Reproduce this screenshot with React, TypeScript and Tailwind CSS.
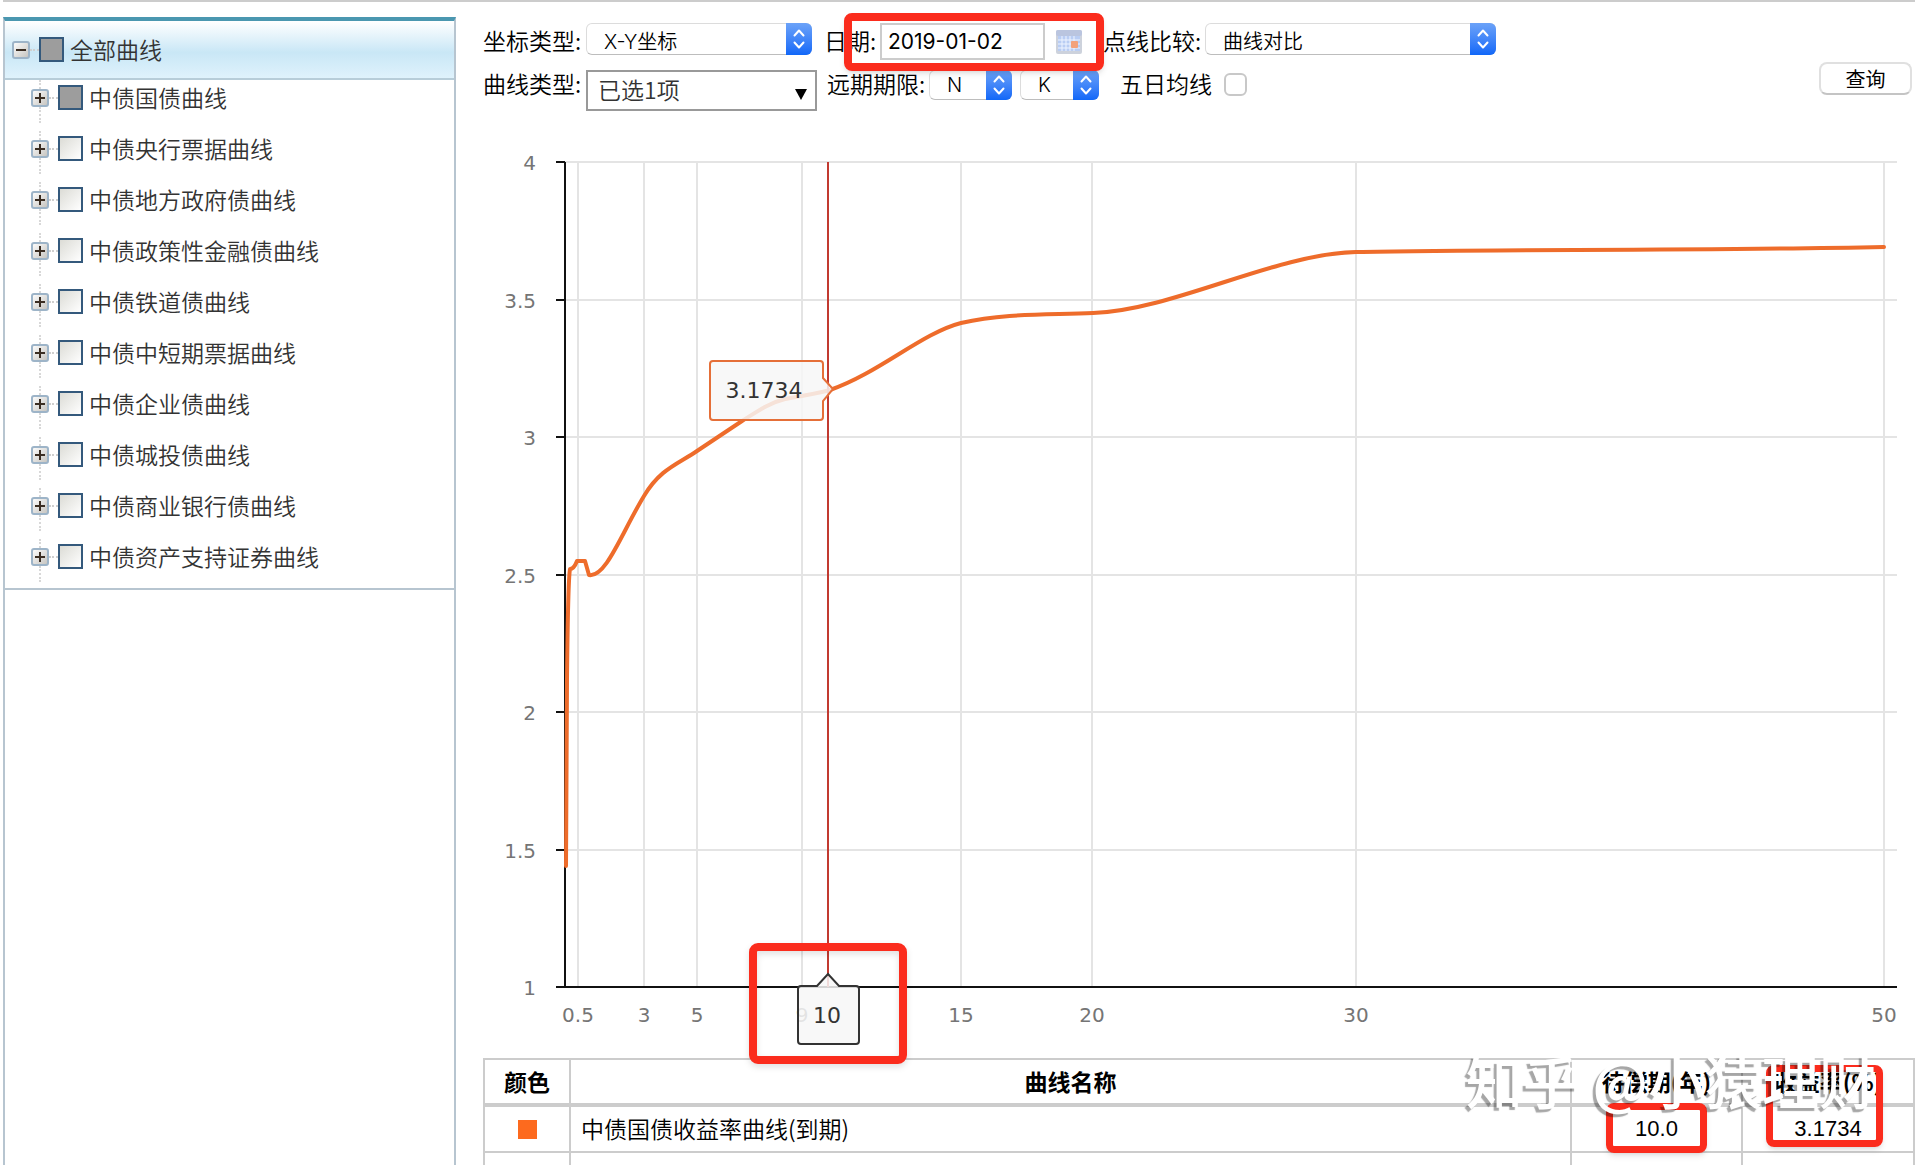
import React, { useState } from 'react';

const CURVE_NAMES = [
  '中债国债曲线',
  '中债央行票据曲线',
  '中债地方政府债曲线',
  '中债政策性金融债曲线',
  '中债铁道债曲线',
  '中债中短期票据曲线',
  '中债企业债曲线',
  '中债城投债曲线',
  '中债商业银行债曲线',
  '中债资产支持证券曲线',
];

const X_TICKS = [0.5, 3, 5, 9, 15, 20, 30, 50];
const Y_TICKS = [1, 1.5, 2, 2.5, 3, 3.5, 4];

const px = (v: number) => Math.round(81 + v * 26.37);
const py = (v: number) => Math.round(867 - (v - 1) * 275);

function Expander({ open }: { open?: boolean }) {
  return (
    <svg viewBox="0 0 18 18" className="block h-[18px] w-[18px]" aria-hidden="true">
      <defs>
        <linearGradient id="expander" x1="0" y1="0" x2="1" y2="1">
          <stop offset="0" stopColor="#ffffff" />
          <stop offset="1" stopColor="#c4c2bd" />
        </linearGradient>
      </defs>
      <rect x="1" y="1" width="16" height="16" rx="2" fill="url(#expander)" stroke="#9db4c8" strokeWidth="2" />
      <path d={open ? 'M4 9h10' : 'M4 9h10M9 4v10'} stroke="#3a2d22" strokeWidth="2" />
    </svg>
  );
}

interface TreeCheckProps {
  id: string;
  partial?: boolean;
}

function TreeCheck({ id, partial }: TreeCheckProps) {
  return (
    <input
      id={id}
      type="checkbox"
      className={`h-[25px] w-[25px] shrink-0 appearance-none border-2 border-[#34597c] ${
        partial ? 'bg-[#9d9d9d]' : 'bg-linear-to-br from-[#dcdcd6] to-white checked:bg-[#9d9d9d]'
      }`}
    />
  );
}

interface MacSelectProps {
  id: string;
  label: string;
  options: string[];
  className: string;
  compact?: boolean;
}

function MacSelect({ id, label, options, className, compact }: MacSelectProps) {
  return (
    <div className={`relative shrink-0 ${compact ? 'h-[30px]' : 'h-8'} ${className}`}>
      <select
        id={id}
        aria-label={label}
        className={`block h-full w-full appearance-none rounded-md border border-[#dcdcdc] border-b-[#bdbdbd] bg-white pl-[17px] font-[Inter,'Noto_Sans_CJK_SC',sans-serif] text-xl leading-7 ${
          compact ? 'pb-0.5' : 'pt-1'
        }`}
      >
        {options.map((o) => (
          <option key={o}>{o}</option>
        ))}
      </select>
      <span className="pointer-events-none absolute inset-y-0 right-0 flex w-[26px] items-center justify-center rounded-r-md bg-linear-to-b from-[#6ba2f8] to-[#0f67f8]">
        <svg viewBox="0 0 12 22" className="h-[22px] w-3" fill="none" stroke="white" strokeWidth="2" strokeLinecap="round" strokeLinejoin="round" aria-hidden="true">
          <path d="M1.500 7.500L6 2.500l4.500 5M1.500 14.500l4.500 5 4.500-5" />
        </svg>
      </span>
    </div>
  );
}

function CalendarIcon() {
  return (
    <svg viewBox="0 0 28 26" className="block h-[26px] w-7" aria-hidden="true">
      <rect x="1" y="1" width="26" height="24" rx="2" fill="#cdd2dc" />
      <rect x="1" y="1" width="26" height="6" rx="2" fill="#bac5df" />
      <rect x="3" y="7" width="22" height="15" fill="#b9cdf3" />
      <path d="M3 11h22M3 15h22M3 19h22M7 7v15M11 7v15M15 7v15M19 7v15" stroke="#eef4ff" strokeWidth="1" />
      <rect x="16" y="12" width="7" height="7" rx="1" fill="#f3a27c" />
    </svg>
  );
}

function Sidebar() {
  return (
    <aside className="mt-[15px] ml-[3px] w-[453px] shrink-0 border-x-2 border-t-4 border-x-[#b7c5d0] border-t-[#4a97b0] text-[23px] font-[350] text-[#333]">
      <div className="flex h-[59px] items-center border-b-2 border-[#b7cdd9] bg-linear-to-b from-white from-0% via-[#c9e7f6] via-55% to-[#dff2fc] pl-[7px]">
        <button type="button" aria-label="收起全部曲线">
          <Expander open />
        </button>
        <span className="w-[9px] border-t-2 border-dotted border-[#cfcfcf]" />
        <TreeCheck id="tree-all" partial />
        <label htmlFor="tree-all" className="ml-1.5">全部曲线</label>
      </div>
      <ul className="border-b-2 border-[#b7c5d0]">
        {CURVE_NAMES.map((name, i) => (
          <li key={name} className="flex h-[51px] items-start pl-[26px] last:h-[49px]">
            <div className="flex flex-col items-center">
              <span className="h-[9px] border-l-2 border-dotted border-[#d8d8d8]" />
              <button type="button" aria-label={`展开${name}`}>
                <Expander />
              </button>
              <span className="h-4 border-l-2 border-dotted border-[#d8d8d8]" />
            </div>
            <div className="flex h-[35px] items-center">
              <span className="w-[9px] border-t-2 border-dotted border-[#cfcfcf]" />
              <TreeCheck id={`tree-${i}`} partial={i === 0} />
              <label htmlFor={`tree-${i}`} className="ml-1.5">{name}</label>
            </div>
          </li>
        ))}
      </ul>
    </aside>
  );
}

function Toolbar() {
  const [date, setDate] = useState('2019-01-02');

  return (
    <form className="flex items-start justify-between pt-[21px]" onSubmit={(e) => e.preventDefault()}>
      <div className="flex flex-col gap-2.5 text-[23px] leading-[34px] font-[350] whitespace-nowrap">
        <div className="flex items-start">
          <label htmlFor="axis" className="w-[103px]">坐标类型:</label>
          <MacSelect id="axis" label="坐标类型" options={['X-Y坐标']} className="w-[226px]" />
          <div className="relative ml-3 flex items-start">
            <label htmlFor="date" className="w-14">日期:</label>
            <input
              id="date"
              type="text"
              value={date}
              onChange={(e) => setDate(e.target.value)}
              className="h-[37px] w-[165px] border-2 border-[#ccc] px-1.5 font-[Inter,sans-serif] text-[21px] font-normal"
            />
            <button type="button" aria-label="选择日期" className="mt-1.5 ml-2.5">
              <CalendarIcon />
            </button>
            <span className="pointer-events-none absolute -top-2.5 -right-[21px] -bottom-[11px] left-5 z-10 rounded-lg border-8 border-[#fb2c1d] shadow-md" />
          </div>
          <label htmlFor="compare" className="ml-5 w-[102px]">点线比较:</label>
          <MacSelect id="compare" label="点线比较" options={['曲线对比']} className="w-[291px]" />
        </div>
        <div className="flex items-start leading-[26px]">
          <span id="curve-type" className="w-[103px]">曲线类型:</span>
          <button
            type="button"
            aria-labelledby="curve-type"
            className="flex h-[41px] w-[231px] items-center justify-between border-2 border-[#999] pr-2 pb-1 pl-2.5 text-[#333]"
          >
            <span>已选1项</span>
            <svg viewBox="0 0 12 11" className="mt-3 h-[11px] w-3" aria-hidden="true">
              <path d="M0 0h12L6 11z" fill="black" />
            </svg>
          </button>
          <label htmlFor="forward-n" className="ml-2.5 w-[102px]">远期期限:</label>
          <MacSelect id="forward-n" label="远期期限 N" options={['N']} className="w-[83px]" compact />
          <MacSelect id="forward-k" label="远期期限 K" options={['K']} className="ml-2 w-[79px]" compact />
          <label htmlFor="average" className="ml-[21px]">五日均线</label>
          <input
            id="average"
            type="checkbox"
            className="mt-[3px] ml-3 h-[23px] w-[23px] appearance-none rounded-md border-2 border-[#c8c8c8] bg-white checked:bg-[#0f67f8]"
          />
        </div>
      </div>
      <button
        type="submit"
        className="mt-[39px] mr-[3px] h-[33px] w-[93px] shrink-0 rounded-lg border-2 border-[#e0e0e0] border-b-[#c4c4c4] text-xl leading-7"
      >
        查询
      </button>
    </form>
  );
}

function YieldChart() {
  return (
    <svg
      viewBox="-1 0 1432 938"
      className="mt-[9px] block h-auto w-full overflow-visible font-['DejaVu_Sans',sans-serif]"
      role="img"
      aria-label="中债国债收益率曲线"
    >
      <g stroke="#e4e4e4" strokeWidth="2">
        {X_TICKS.map((t) => (
          <line key={t} x1={px(t)} x2={px(t)} y1={py(4)} y2={py(1)} />
        ))}
        {Y_TICKS.slice(1).map((t) => (
          <line key={t} x1={px(0)} x2="1413" y1={py(t)} y2={py(t)} />
        ))}
      </g>
      <g stroke="#111" strokeWidth="2">
        <line x1={px(0)} x2={px(0)} y1={py(4)} y2={py(1)} />
        <line x1={px(0)} x2="1413" y1={py(1)} y2={py(1)} />
        {Y_TICKS.map((t) => (
          <line key={t} x1="72" x2={px(0)} y1={py(t)} y2={py(t)} />
        ))}
      </g>
      <g fill="#757575" fontSize="20">
        {Y_TICKS.map((t) => (
          <text key={t} x="52" y={py(t) + 8} textAnchor="end">{t}</text>
        ))}
        {X_TICKS.map((t) => (
          <text key={t} x={px(t)} y="902" textAnchor="middle">{t}</text>
        ))}
      </g>

      <path
        d="M82 746L83 560Q84 460 86 449Q90 449 93 441H101L105 455C122 458 138 412 160 376C176 349 194 344 213 331L258 301C274 291 285 283 301 279C318 276 330 274 346 270C395 253 438 213 477 203C520 193 562 195 609 193C690 190 790 134 872 132C1000 129 1200 131 1400 127"
        fill="none"
        stroke="#ee6c2b"
        strokeWidth="4"
        strokeLinejoin="round"
        strokeLinecap="round"
      />
      <line x1="344" x2="344" y1={py(4)} y2={py(1)} stroke="#c23a30" strokeWidth="2" />

      {/* value tooltip */}
      <path
        d="M229 241H336Q339 241 339 244V258L349 269L339 281V297Q339 300 336 300H229Q226 300 226 297V244Q226 241 229 241Z"
        fill="#f7f7f7"
        fillOpacity="0.85"
        stroke="#e56f38"
        strokeWidth="2"
      />
      <text x="280" y="278" fontSize="22" fill="#333" textAnchor="middle">3.1734</text>

      {/* term tooltip */}
      <path
        d="M317 866H333L344 854L355 866H372Q375 866 375 869V921Q375 924 372 924H317Q314 924 314 921V869Q314 866 317 866Z"
        fill="#f7f7f7"
        fillOpacity="0.85"
        stroke="#333"
        strokeWidth="2"
      />
      <text x="343" y="903" fontSize="22" fill="#333" textAnchor="middle">10</text>
      <rect x="269" y="827" width="150" height="113" rx="5" fill="none" stroke="#fb2c1d" strokeWidth="8" className="drop-shadow-md" />
    </svg>
  );
}

function ResultTable() {
  return (
    <table className="w-full table-fixed border-collapse border-2 border-[#ccc] text-[23px] leading-8">
      <colgroup>
        <col className="w-[86px]" />
        <col />
        <col className="w-[171px]" />
        <col className="w-[172px]" />
      </colgroup>
      <thead>
        <tr className="h-[46px] border-b-4 border-[#ccc] font-bold">
          <th className="border-r-2 border-[#ccc] pb-0.5">颜色</th>
          <th className="border-r-2 border-[#ccc] pb-0.5">曲线名称</th>
          <th className="border-r-2 border-[#ccc] pb-0.5">待偿期(年)</th>
          <th className="pb-0.5">收益率(%)</th>
        </tr>
      </thead>
      <tbody>
        <tr className="h-[47px] border-b-2 border-[#ccc]">
          <td className="border-r-2 border-[#ccc]">
            <span className="mx-auto block h-[19px] w-[19px] bg-[#fd6a1e]" />
          </td>
          <td className="border-r-2 border-[#ccc] pb-0.5 pl-2.5 font-[350]">中债国债收益率曲线(到期)</td>
          <td className="relative border-r-2 border-[#ccc] text-center font-['Liberation_Sans',sans-serif] text-[22px]">
            10.0
            <span className="pointer-events-none absolute inset-x-[34px] -top-1 -bottom-0.5 rounded-lg border-[7px] border-[#fb2c1d] shadow-md" />
          </td>
          <td className="relative text-center font-['Liberation_Sans',sans-serif] text-[22px]">
            3.1734
            <span className="pointer-events-none absolute right-[30px] bottom-1 left-[23px] h-[82px] rounded-lg border-[7px] border-[#fb2c1d] shadow-md" />
          </td>
        </tr>
        <tr className="h-5">
          <td className="border-r-2 border-[#ccc]" />
          <td className="border-r-2 border-[#ccc]" />
          <td className="border-r-2 border-[#ccc]" />
          <td />
        </tr>
      </tbody>
    </table>
  );
}

export default function App() {
  return (
    <div className="flex h-screen flex-col overflow-hidden bg-white font-['Noto_Sans_CJK_SC',sans-serif] text-black">
      <div className="mr-[5px] ml-[3px] h-0.5 shrink-0 bg-[#ccc]" />
      <div className="flex min-h-0 grow">
        <Sidebar />
        <main className="relative ml-[27px] min-w-0 grow pr-[5px]">
          <Toolbar />
          <YieldChart />
          <ResultTable />
          <p className="pointer-events-none absolute right-11 bottom-[46px] z-20 text-[57px] leading-[80px] font-medium whitespace-nowrap text-white [text-shadow:-3px_3px_1px_rgba(0,0,0,0.35)]">
            知乎 @小猿理财
          </p>
        </main>
      </div>
    </div>
  );
}
